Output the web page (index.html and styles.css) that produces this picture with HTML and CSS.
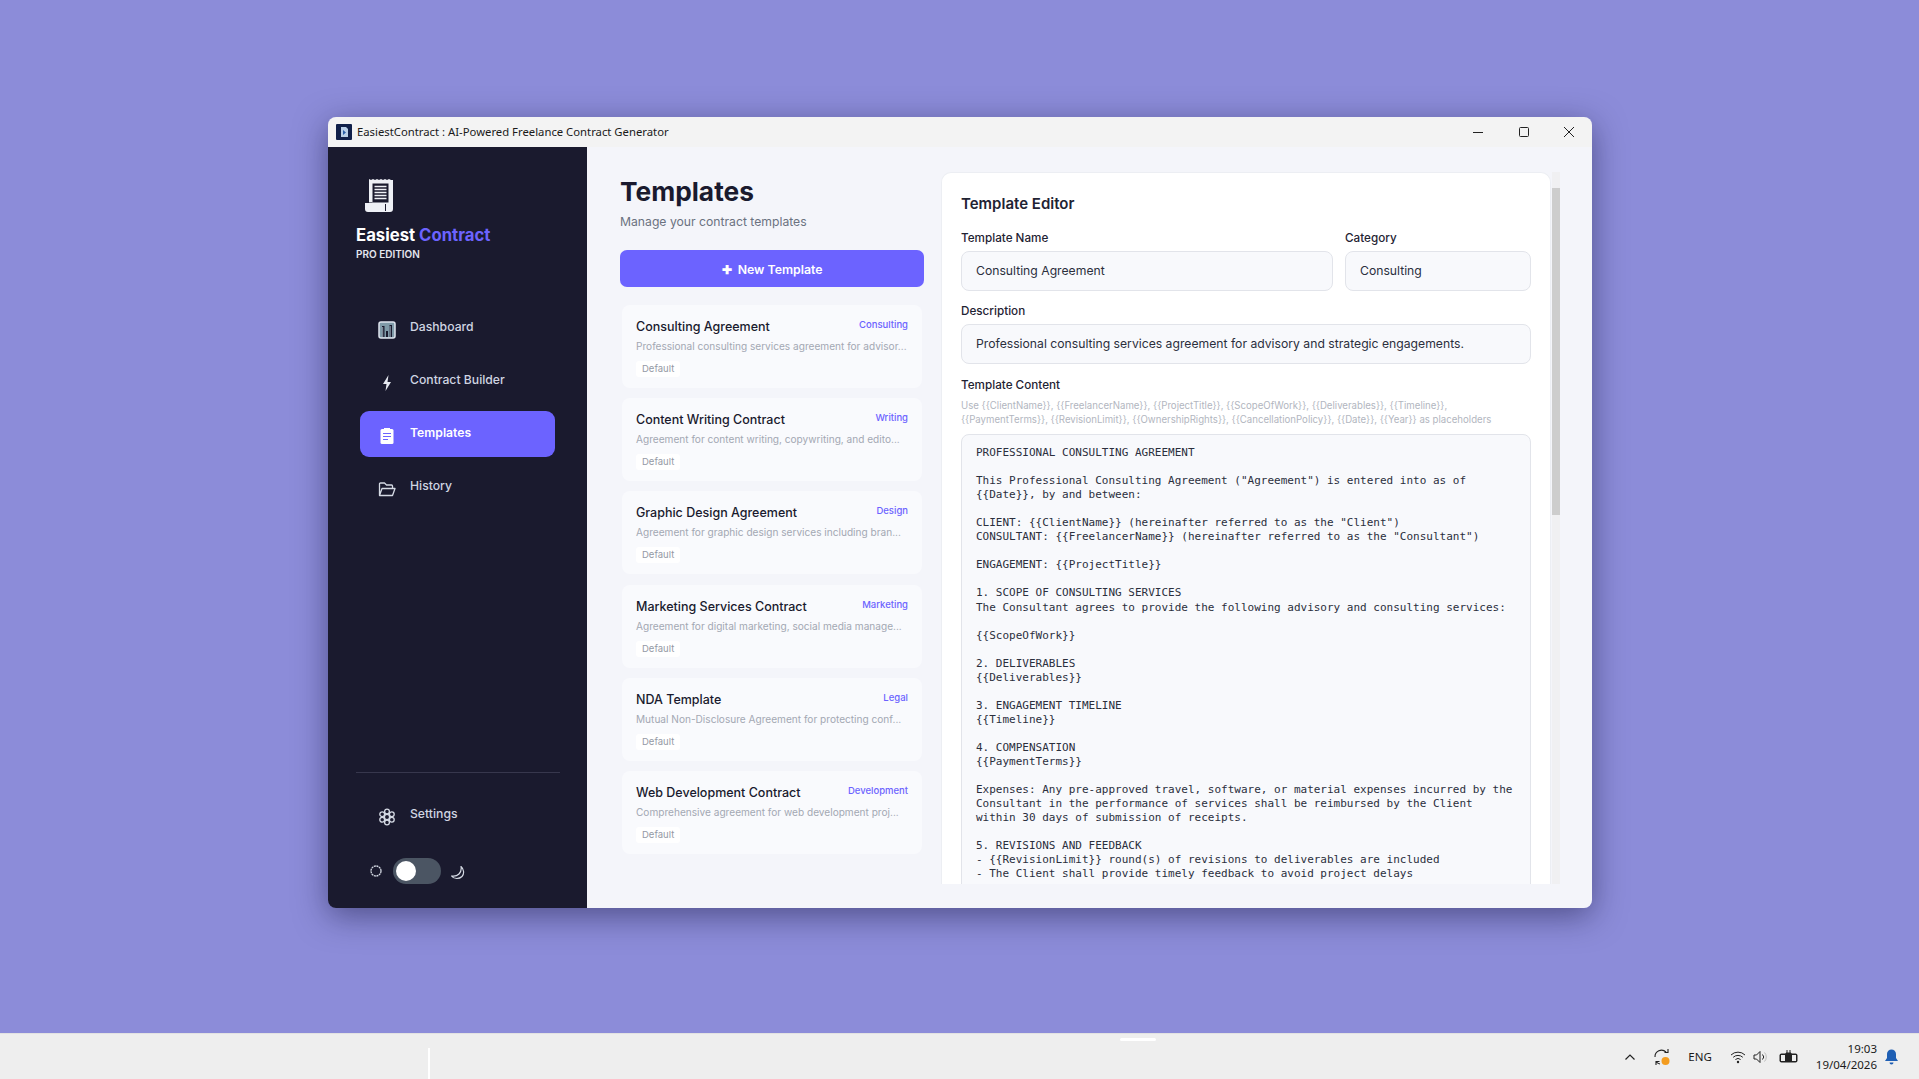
FILE: index.html
```html
<!DOCTYPE html>
<html lang="en">
<head>
    <meta charset="UTF-8">
    <title>EasiestContract : AI-Powered Freelance Contract Generator</title>
    <link rel="stylesheet" href="styles.css">
</head>
<body>
    <div class="desktop">
        <div class="window">
            <div class="titlebar">
                <svg class="app-icon" width="16" height="16" viewBox="0 0 16 16">
                    <rect width="16" height="16" rx="1" fill="#10204a"/>
                    <path d="M5 3h5l2 2v8H5z" fill="#b9cfe8"/>
                    <path d="M7 6l3 2.500-3 2.500z" fill="#2a5fa8"/>
                </svg>
                <span class="title-text">EasiestContract : AI-Powered Freelance Contract Generator</span>
                <div class="win-controls">
                    <svg width="12" height="12" viewBox="0 0 12 12"><path d="M1 6.500h10" stroke="#222" fill="none"/></svg>
                    <svg width="12" height="12" viewBox="0 0 12 12"><rect x="1.500" y="1.500" width="9" height="9" rx="1" stroke="#222" fill="none"/></svg>
                    <svg width="12" height="12" viewBox="0 0 12 12"><path d="M1 1l10 10M11 1L1 11" stroke="#222" fill="none"/></svg>
                </div>
            </div>
            <div class="app">
                <aside class="sidebar">
                    <div class="logo">
                        <svg class="logo-icon" width="28" height="34" viewBox="0 0 28 34">
                            <path d="M4 1l2 1 2-1 2 1 2-1 2 1 2-1 2 1 2-1 2 1 2-1 2 1h2v29a3 3 0 0 1-3 3H3a3 3 0 0 1-3-3v-6h4z" fill="#eef0f6"/>
                            <path d="M7.500 5.500h16v19h-16z" fill="#1a1a2e"/>
                            <path d="M9.500 8.500h12M9.500 11.500h12M9.500 14.500h12M9.500 17.500h12M9.500 20.500h12" stroke="#eef0f6" stroke-width="1.300"/>
                            <path d="M20.500 26v7" stroke="#1a1a2e"/>
                            <path d="M0 24.500h7.500" stroke="#1a1a2e" stroke-width=".6"/>
                        </svg>
                        <div class="logo-name">Easiest <span class="accent">Contract</span></div>
                        <div class="logo-sub">PRO EDITION</div>
                    </div>
                    <nav class="nav">
                        <a class="nav-item">
                            <svg class="nav-icon" width="18" height="18" viewBox="0 0 18 18">
                                <rect x="1" y="1" width="16" height="16" rx="2" fill="#7f9aa8" stroke="#dfe5ee" stroke-width="1.500"/>
                                <path d="M4 5h2.500v11H4zM8 10h2v6H8zM11.500 4H14v12h-2.500z" fill="#1a1a2e"/>
                                <path d="M4.700 6v10M12.200 5v11" stroke="#c8dbe6" stroke-width=".7"/>
                            </svg>
                            <span>Dashboard</span>
                        </a>
                        <a class="nav-item">
                            <svg class="nav-icon" width="18" height="18" viewBox="0 0 18 18">
                                <path d="M10.500 1L5 10h3.500L7.500 17 13 8H9.500z" fill="#e5e8f0"/>
                            </svg>
                            <span>Contract Builder</span>
                        </a>
                        <a class="nav-item active">
                            <svg class="nav-icon" width="18" height="18" viewBox="0 0 18 18">
                                <rect x="2.500" y="2" width="13" height="15" rx="1.500" fill="#fff"/>
                                <path d="M6 1h6v2.500H6z" fill="#fff"/>
                                <path d="M5 6.500h8M5 9.500h8M5 12.500h5" stroke="#6c63ff" stroke-width="1.200"/>
                            </svg>
                            <span>Templates</span>
                        </a>
                        <a class="nav-item">
                            <svg class="nav-icon" width="18" height="18" viewBox="0 0 18 18">
                                <path d="M1.500 15.500V4a1 1 0 0 1 1-1h4l2 2h5a1 1 0 0 1 1 1v2M1.500 15.500L4 8.500h13l-2.500 7z" fill="none" stroke="#d5dae4" stroke-width="1.300" stroke-linejoin="round"/>
                            </svg>
                            <span>History</span>
                        </a>
                    </nav>
                    <div class="sidebar-bottom">
                        <div class="divider"></div>
                        <a class="nav-item">
                            <svg class="nav-icon" width="18" height="18" viewBox="0 0 18 18" fill="none" stroke="#d5dae4" stroke-width="1.300">
                                <circle cx="9" cy="9" r="2.600"/>
                                <circle cx="9" cy="3.500" r="2.400"/>
                                <circle cx="9" cy="14.500" r="2.400"/>
                                <circle cx="4.200" cy="6.200" r="2.400"/>
                                <circle cx="13.800" cy="6.200" r="2.400"/>
                                <circle cx="4.200" cy="11.800" r="2.400"/>
                                <circle cx="13.800" cy="11.800" r="2.400"/>
                            </svg>
                            <span>Settings</span>
                        </a>
                        <div class="theme-row">
                            <svg width="12" height="12" viewBox="0 0 12 12"><circle cx="6" cy="6" r="5" fill="none" stroke="#d5dae4" stroke-width="1.300" stroke-dasharray="2 .6"/></svg>
                            <div class="toggle"><div class="knob"></div></div>
                            <svg class="moon" width="14" height="14" viewBox="0 0 14 14"><path d="M10 .5C13 3 13.500 8 11 10.500 8.500 13 3 13.500 .5 10c3 .5 5.500 0 7.500-2s2.500-5 2-7.500z" fill="none" stroke="#d5dae4" stroke-width="1.200" stroke-linejoin="round"/></svg>
                        </div>
                    </div>
                </aside>
                <main class="content">
                    <section class="list-col">
                        <h1>Templates</h1>
                        <p class="subtitle">Manage your contract templates</p>
                        <button class="new-btn"><span class="plus">✚</span> New Template</button>
                        <div class="cards">
                            <div class="card">
                                <div class="card-top"><span class="card-name">Consulting Agreement</span><span class="card-cat">Consulting</span></div>
                                <div class="card-desc">Professional consulting services agreement for advisor...</div>
                                <span class="tag">Default</span>
                            </div>
                            <div class="card">
                                <div class="card-top"><span class="card-name">Content Writing Contract</span><span class="card-cat">Writing</span></div>
                                <div class="card-desc">Agreement for content writing, copywriting, and edito...</div>
                                <span class="tag">Default</span>
                            </div>
                            <div class="card">
                                <div class="card-top"><span class="card-name">Graphic Design Agreement</span><span class="card-cat">Design</span></div>
                                <div class="card-desc">Agreement for graphic design services including bran...</div>
                                <span class="tag">Default</span>
                            </div>
                            <div class="card">
                                <div class="card-top"><span class="card-name">Marketing Services Contract</span><span class="card-cat">Marketing</span></div>
                                <div class="card-desc">Agreement for digital marketing, social media manage...</div>
                                <span class="tag">Default</span>
                            </div>
                            <div class="card">
                                <div class="card-top"><span class="card-name">NDA Template</span><span class="card-cat">Legal</span></div>
                                <div class="card-desc">Mutual Non-Disclosure Agreement for protecting conf...</div>
                                <span class="tag">Default</span>
                            </div>
                            <div class="card">
                                <div class="card-top"><span class="card-name">Web Development Contract</span><span class="card-cat">Development</span></div>
                                <div class="card-desc">Comprehensive agreement for web development proj...</div>
                                <span class="tag">Default</span>
                            </div>
                        </div>
                    </section>
                    <section class="editor">
                        <h2>Template Editor</h2>
                        <div class="form-row">
                            <div class="form-group grow">
                                <label>Template Name</label>
                                <div class="field">Consulting Agreement</div>
                            </div>
                            <div class="form-group cat">
                                <label>Category</label>
                                <div class="field">Consulting</div>
                            </div>
                        </div>
                        <div class="form-group">
                            <label>Description</label>
                            <div class="field">Professional consulting services agreement for advisory and strategic engagements.</div>
                        </div>
                        <div class="form-group">
                            <label>Template Content</label>
                            <p class="hint">Use {{ClientName}}, {{FreelancerName}}, {{ProjectTitle}}, {{ScopeOfWork}}, {{Deliverables}}, {{Timeline}},<br>{{PaymentTerms}}, {{RevisionLimit}}, {{OwnershipRights}}, {{CancellationPolicy}}, {{Date}}, {{Year}} as placeholders</p>
                            <div class="code">PROFESSIONAL CONSULTING AGREEMENT

This Professional Consulting Agreement ("Agreement") is entered into as of
{{Date}}, by and between:

CLIENT: {{ClientName}} (hereinafter referred to as the "Client")
CONSULTANT: {{FreelancerName}} (hereinafter referred to as the "Consultant")

ENGAGEMENT: {{ProjectTitle}}

1. SCOPE OF CONSULTING SERVICES
The Consultant agrees to provide the following advisory and consulting services:

{{ScopeOfWork}}

2. DELIVERABLES
{{Deliverables}}

3. ENGAGEMENT TIMELINE
{{Timeline}}

4. COMPENSATION
{{PaymentTerms}}

Expenses: Any pre-approved travel, software, or material expenses incurred by the
Consultant in the performance of services shall be reimbursed by the Client
within 30 days of submission of receipts.

5. REVISIONS AND FEEDBACK
- {{RevisionLimit}} round(s) of revisions to deliverables are included
- The Client shall provide timely feedback to avoid project delays</div>
                        </div>
                    </section>
                    <div class="scrollbar"><div class="thumb"></div></div>
                </main>
            </div>
        </div>
    </div>
    <footer class="taskbar">
        <div class="task-indicator"></div>
        <div class="task-line"></div>
        <svg class="tray-chevron" width="12" height="8" viewBox="0 0 12 8"><path d="M1.500 6.500L6 2l4.500 4.500" fill="none" stroke="#222" stroke-width="1.200"/></svg>
        <svg class="tray-sync" width="20" height="20" viewBox="0 0 20 20">
            <path d="M3 10a6.500 6.500 0 0 1 11-5M16 2v3.500h-3.500M4 18v-3.500h3.500M4 14.500a6.500 6.500 0 0 0 4 2.500" fill="none" stroke="#222" stroke-width="1.100"/>
            <circle cx="13.500" cy="14" r="4" fill="#f39c1f"/>
        </svg>
        <span class="tray-lang">ENG</span>
        <svg class="tray-wifi" width="16" height="14" viewBox="0 0 16 14"><path d="M1 5a10 10 0 0 1 14 0M3.200 7.300a7 7 0 0 1 9.600 0M5.400 9.500a4 4 0 0 1 5.200 0" fill="none" stroke="#222"/><circle cx="8" cy="12" r="1.200" fill="#222"/></svg>
        <svg class="tray-sound" width="16" height="14" viewBox="0 0 16 14"><path d="M1 5h2.500L7 1.500v11L3.500 9H1z" fill="none" stroke="#222"/><path d="M9.500 4.500a3.500 3.500 0 0 1 0 5" fill="none" stroke="#222"/><path d="M11.500 2.500a6.500 6.500 0 0 1 0 9" fill="none" stroke="#bbb"/></svg>
        <svg class="tray-batt" width="20" height="14" viewBox="0 0 20 14"><rect x="0.500" y="3.500" width="18" height="9" rx="2" fill="#222"/><rect x="2" y="5" width="4" height="6" fill="#eee"/><rect x="13" y="5" width="4" height="6" fill="#eee"/><path d="M8 0v4M11 0v4M7 3h5v3H7zM9.500 6v6" stroke="#222" fill="#222"/></svg>
        <div class="clock"><div>19:03</div><div>19/04/2026</div></div>
        <svg class="tray-bell" width="15" height="16" viewBox="0 0 15 16"><path d="M7.500 0.500a4.500 4.500 0 0 1 4.500 4.500v4l2 3H1l2-3V5a4.500 4.500 0 0 1 4.500-4.500zM5.500 13.500h4a2 2 0 0 1-4 0z" fill="#1f5fb4"/></svg>
    </footer>
</body>
</html>
```

FILE: styles.css
```css
* {
    box-sizing: border-box;
}
html, body {
    margin: 0;
    height: 100%;
}
body {
    display: flex;
    flex-direction: column;
    background: #8c8cd9;
    font-family: Inter, "Noto Sans", sans-serif;
    overflow: hidden;
}
.desktop {
    flex: 1;
    padding: 117px 0 0 328px;
}
.window {
    width: 1264px;
    height: 791px;
    display: flex;
    flex-direction: column;
    border-radius: 8px;
    overflow: hidden;
    box-shadow: 0 8px 32px rgba(20, 20, 60, 0.5);
}

/* title bar */
.titlebar {
    height: 30px;
    flex: none;
    display: flex;
    align-items: center;
    padding: 0 0 1px 8px;
    background: #f3f3f3;
}
.app-icon {
    margin-right: 5px;
}
.title-text {
    font-family: "Noto Sans", sans-serif;
    font-size: 11.300px;
    color: #1a1a1a;
}
.win-controls {
    margin-left: auto;
    display: flex;
    gap: 33.500px;
    padding-right: 17px;
}

.app {
    flex: 1;
    display: flex;
    min-height: 0;
}

/* sidebar */
.sidebar {
    width: 259px;
    flex: none;
    display: flex;
    flex-direction: column;
    padding: 31px 32px 24px;
    background: #1a1a2e;
}
.logo {
    margin-left: -4px;
    color: #fff;
}
.logo-icon {
    display: block;
    margin: 0 0 12px 9px;
}
.logo-name {
    font-size: 16.700px;
    line-height: 22px;
    font-weight: 700;
}
.accent {
    color: #6c63ff;
}
.logo-sub {
    margin-top: 1px;
    font-size: 10px;
    line-height: 14px;
    font-weight: 600;
    color: #e5e7ef;
}
.nav {
    margin-top: 44px;
    display: flex;
    flex-direction: column;
    gap: 7px;
}
.nav-item {
    height: 46px;
    display: flex;
    align-items: center;
    gap: 14px;
    padding: 0 0 3px 18px;
    border-radius: 9px;
    font-size: 12.200px;
    font-weight: 500;
    color: #d0d5e2;
}
.nav-item.active {
    background: #6c63ff;
    color: #fff;
    font-weight: 600;
}
.nav-icon {
    flex: none;
    margin-top: 6px;
}
.sidebar-bottom {
    margin-top: auto;
}
.divider {
    height: 1px;
    margin: 0 -5px 19px -4px;
    background: #37374d;
}
.theme-row {
    margin-top: 20px;
    display: flex;
    align-items: center;
    gap: 11px;
    padding-left: 10px;
}
.toggle {
    width: 48px;
    height: 26px;
    padding: 3px;
    border-radius: 13px;
    background: #4b5563;
}
.knob {
    width: 20px;
    height: 20px;
    border-radius: 50%;
    background: #fff;
}
.moon {
    margin: 3px 0 0 -1px;
}

/* main */
.content {
    flex: 1;
    display: flex;
    min-width: 0;
    padding: 25px 32px 24px 33px;
    background: #f4f5fa;
}
.list-col {
    width: 304px;
    flex: none;
    margin-right: 17px;
}
h1 {
    margin: 2px 0 3px;
    font-size: 26.300px;
    line-height: 36px;
    font-weight: 700;
    color: #1a1a2e;
}
.subtitle {
    margin: 0 0 19px;
    font-size: 12.200px;
    line-height: 18px;
    color: #6b7280;
}
.new-btn {
    width: 100%;
    height: 37px;
    display: block;
    border: none;
    border-radius: 7px;
    padding: 1px 0 0;
    background: #6c63ff;
    color: #fff;
    font-family: inherit;
    font-size: 12.300px;
    font-weight: 600;
}
.plus {
    font-size: 12px;
    margin-right: 3px;
}
.cards {
    margin: 18px 2px 0;
    display: flex;
    flex-direction: column;
    gap: 10.200px;
}
.card {
    height: 83px;
    padding: 12px 14px 0;
    border-radius: 8px;
    background: #f9fafd;
}
.card-top {
    display: flex;
    justify-content: space-between;
    line-height: 20px;
    margin-bottom: -1px;
}
.card-name {
    font-size: 12.500px;
    font-weight: 500;
    color: #1a1a2e;
}
.card-cat {
    font-size: 9.500px;
    font-weight: 500;
    line-height: 16px;
    color: #6c63ff;
}
.card-desc {
    font-size: 10.100px;
    line-height: 20px;
    white-space: nowrap;
    color: #a3a8b3;
}
.tag {
    display: inline-block;
    margin-top: 3px;
    padding: 0 6px;
    font-size: 9.500px;
    line-height: 16px;
    border-radius: 3px;
    background: #ffffff;
    color: #9499a5;
}

/* editor */
.editor {
    flex: 1;
    min-width: 0;
    overflow: hidden;
    padding: 20px 19px 0;
    background: #fff;
    border: 1px solid #eceef3;
    border-bottom: none;
    border-radius: 10px 10px 0 0;
}
h2 {
    margin: 0 0 14px;
    font-size: 15px;
    line-height: 22px;
    font-weight: 600;
    color: #1f2333;
}
.form-row {
    display: flex;
    gap: 12px;
    margin-bottom: -1px;
}
.form-group {
    margin-bottom: 12px;
}
.grow {
    flex: 1;
}
.cat {
    width: 186px;
}
label {
    display: block;
    margin-bottom: 4px;
    font-size: 11.700px;
    line-height: 18px;
    font-weight: 500;
    color: #1f2333;
}
.field {
    height: 40px;
    padding: 0 14px;
    line-height: 38.500px;
    font-size: 12.200px;
    color: #2b2f3d;
    background: #f8f9fc;
    border: 1px solid #e2e4ea;
    border-radius: 8px;
}
.hint {
    margin: 5px 0 7px;
    font-size: 9.650px;
    line-height: 14px;
    white-space: nowrap;
    color: #b2b6c0;
}
.code {
    height: 600px;
    padding: 11px 14px;
    font-family: "DejaVu Sans Mono", monospace;
    font-size: 11px;
    line-height: 14.050px;
    white-space: pre;
    color: #2b2f3d;
    background: #f8f9fc;
    border: 1px solid #e2e4ea;
    border-radius: 8px;
}

.scrollbar {
    width: 8px;
    flex: none;
    margin-left: 1px;
    padding-top: 16px;
    background: #f0f0f2;
}
.thumb {
    height: 327px;
    background: #cdcdcd;
}

/* taskbar */
.taskbar {
    position: relative;
    height: 46px;
    flex: none;
    display: flex;
    align-items: center;
    justify-content: flex-end;
    background: #eeeeee;
    border-top: 1px solid #e2e2e2;
    font-family: "Noto Sans", sans-serif;
    color: #1a1a1a;
}
.task-indicator {
    position: absolute;
    left: 1120px;
    top: 4px;
    width: 36px;
    height: 3px;
    border-radius: 2px;
    background: #fff;
}
.task-line {
    position: absolute;
    left: 428px;
    top: 14px;
    bottom: 0;
    width: 2px;
    background: #fff;
}
.tray-chevron {
    margin-right: 16px;
}
.tray-sync {
    margin-right: 16px;
}
.tray-lang {
    font-size: 11.500px;
    margin-right: 18px;
}
.tray-wifi {
    margin-right: 7px;
}
.tray-sound {
    margin-right: 10px;
}
.clock {
    margin: 0 7px 0 17px;
    text-align: right;
    font-size: 11.500px;
    line-height: 16px;
}
.tray-bell {
    margin-right: 20px;
}
```
